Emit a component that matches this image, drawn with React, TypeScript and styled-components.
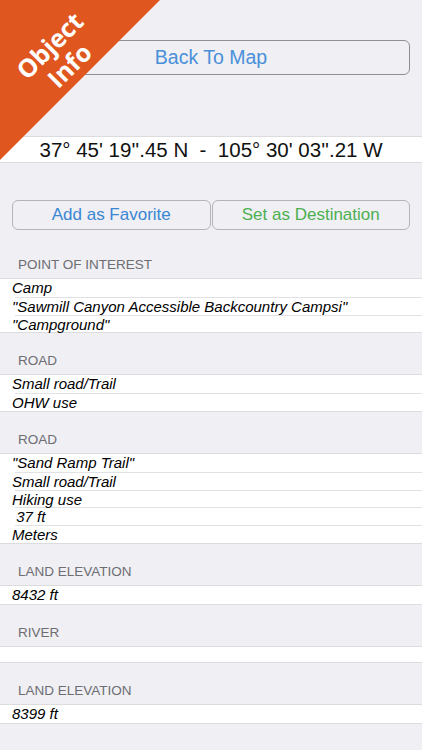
import React from 'react';
import styled, { createGlobalStyle } from 'styled-components';

interface ISection {
  title: string;
  rows: string[];
}

const sections: ISection[] = [
  {
    title: 'Point of Interest',
    rows: ['Camp', '"Sawmill Canyon Accessible Backcountry Campsi"', '"Campground"'],
  },
  { title: 'Road', rows: ['Small road/Trail', 'OHW use'] },
  {
    title: 'Road',
    rows: ['"Sand Ramp Trail"', 'Small road/Trail', 'Hiking use', '\u00a037 ft', 'Meters'],
  },
  { title: 'Land Elevation', rows: ['8432 ft'] },
  { title: 'River', rows: [''] },
  { title: 'Land Elevation', rows: ['8399 ft'] },
];

const GlobalStyle = createGlobalStyle`
  html, body {
    margin: 0;
    padding: 0;
    background: #efeff4;
  }
  body {
    font-family: 'Liberation Sans', Arial, sans-serif;
    -webkit-font-smoothing: antialiased;
  }
`;

const StyledPage = styled.div`
  position: relative;
  width: 422px;
  height: 750px;
  overflow: hidden;
  background: #efeff4;
  padding-top: 40px;
  box-sizing: border-box;
`;

const StyledButton = styled.button<{ $color: string }>`
  display: flex;
  align-items: center;
  justify-content: center;
  height: 100%;
  background: #efeff4;
  border: 1px solid #9a9a9f;
  border-radius: 6px;
  color: ${(p) => p.$color};
  font-family: 'Liberation Sans', Arial, sans-serif;
  font-size: 17px;
  padding: 0;
  cursor: pointer;
`;

const StyledBackRow = styled.div`
  height: 35px;
  margin: 0 12px;
  display: flex;

  ${StyledButton} {
    flex: 1;
    font-size: 19.5px;
    border-color: #8e8e93;
  }
`;

const StyledCoords = styled.div`
  margin-top: 61px;
  height: 27px;
  background: white;
  border-top: 1px solid #dcdce0;
  border-bottom: 1px solid #dcdce0;
  box-sizing: border-box;
  display: flex;
  align-items: center;
  justify-content: center;
  font-size: 20.5px;
  color: #111;
  white-space: pre;
`;

const StyledActions = styled.div`
  margin: 37px 12px 0;
  height: 30px;
  display: grid;
  grid-template-columns: 1fr 1fr;
  gap: 1px;

  ${StyledButton} {
    border-color: #b4b4b9;
  }
`;

const StyledHeader = styled.div`
  height: 41px;
  box-sizing: border-box;
  padding: 0 18px 5px;
  display: flex;
  align-items: flex-end;
  font-size: 13.5px;
  line-height: 16px;
  color: #6d6d72;
  text-transform: uppercase;

  &:first-child {
    height: 48px;
  }
`;

const StyledGroup = styled.div`
  background: white;
  border-top: 1px solid #dcdce0;
  border-bottom: 1px solid #dcdce0;
`;

const StyledRow = styled.div<{ $empty?: boolean }>`
  height: ${(p) => (p.$empty ? '15px' : '17.8px')};
  box-sizing: border-box;
  padding-left: 12px;
  font-size: 15px;
  line-height: 17px;
  font-style: italic;
  color: #000;
  white-space: pre;

  & + & {
    border-top: 1px solid #e2e2e6;
    margin-left: 15px;
    padding-left: 0;
    text-indent: -3px;
  }
`;

const StyledBanner = styled.div`
  position: absolute;
  top: 0;
  left: 0;
  width: 160px;
  height: 160px;
  background: #e0561f;
  clip-path: polygon(0 0, 100% 0, 0 100%);
  pointer-events: none;
`;

const StyledBannerText = styled.div`
  position: absolute;
  left: -3px;
  top: 27px;
  width: 124px;
  height: 56px;
  transform: rotate(-45deg);
  color: white;
  font-family: 'Open Sans', 'Liberation Sans', sans-serif;
  font-weight: 700;
  font-size: 25px;
  line-height: 28px;
  text-align: center;
`;

const App = () => (
  <>
    <GlobalStyle />
    <StyledPage>
      <StyledBackRow>
        <StyledButton $color="#4a90d9">Back To Map</StyledButton>
      </StyledBackRow>
      <StyledCoords>{"37° 45' 19''.45 N  -  105° 30' 03''.21 W"}</StyledCoords>
      <StyledActions>
        <StyledButton $color="#3b86d2">Add as Favorite</StyledButton>
        <StyledButton $color="#4caf50">Set as Destination</StyledButton>
      </StyledActions>
      <div>
        {sections.map((section, i) => (
          <React.Fragment key={i}>
            <StyledHeader>{section.title}</StyledHeader>
            <StyledGroup>
              {section.rows.map((row, j) => (
                <StyledRow key={j} $empty={row === ''}>
                  {row}
                </StyledRow>
              ))}
            </StyledGroup>
          </React.Fragment>
        ))}
      </div>
      <StyledBanner>
        <StyledBannerText>
          Object
          <br />
          Info
        </StyledBannerText>
      </StyledBanner>
    </StyledPage>
  </>
);

export default App;
